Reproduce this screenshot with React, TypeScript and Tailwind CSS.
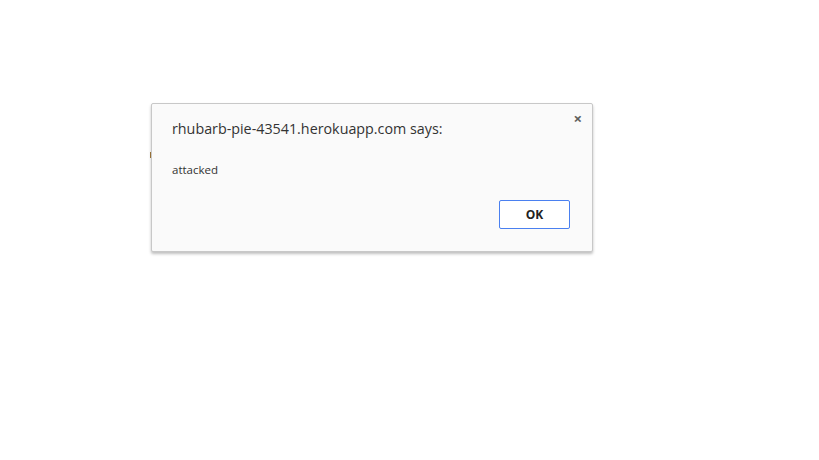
export default function App() {
  return (
    <div
      className="relative h-[460px] w-[819px] overflow-hidden bg-white"
      style={{ fontFamily: '"Open Sans", "Noto Sans", sans-serif' }}
    >
      {/* stray page element peeking behind the dialog */}
      <div className="absolute left-[150px] top-[152px] h-[6px] w-[1px] bg-[#a47a3c]" />
      <div className="pl-[151px] pt-[103px]">
        <div className="relative flex h-[149px] w-[442px] flex-col rounded-[2px] border border-[#c8c8c8] bg-[#fafafa] shadow-[0_2px_3px_rgba(0,0,0,0.25)]">
          <button className="absolute right-[10px] top-[7px] text-[15px] leading-none font-bold text-[#5f5f5f]">
            ×
          </button>
          <div className="pl-[20px] pt-[14px] text-[14.3px] leading-[22px] text-[#333]">
            rhubarb-pie-43541.herokuapp.com says:
          </div>
          <div className="pl-[20px] pt-[23px] text-[11.5px] leading-[14px] text-[#333]">
            attacked
          </div>
          <div className="flex flex-1 items-end justify-end pb-[22px] pr-[22px]">
            <button className="h-[29px] w-[71px] rounded-[2px] border border-[#4a80f0] bg-white text-[12px] font-bold text-[#222]">
              OK
            </button>
          </div>
        </div>
      </div>
    </div>
  );
}
